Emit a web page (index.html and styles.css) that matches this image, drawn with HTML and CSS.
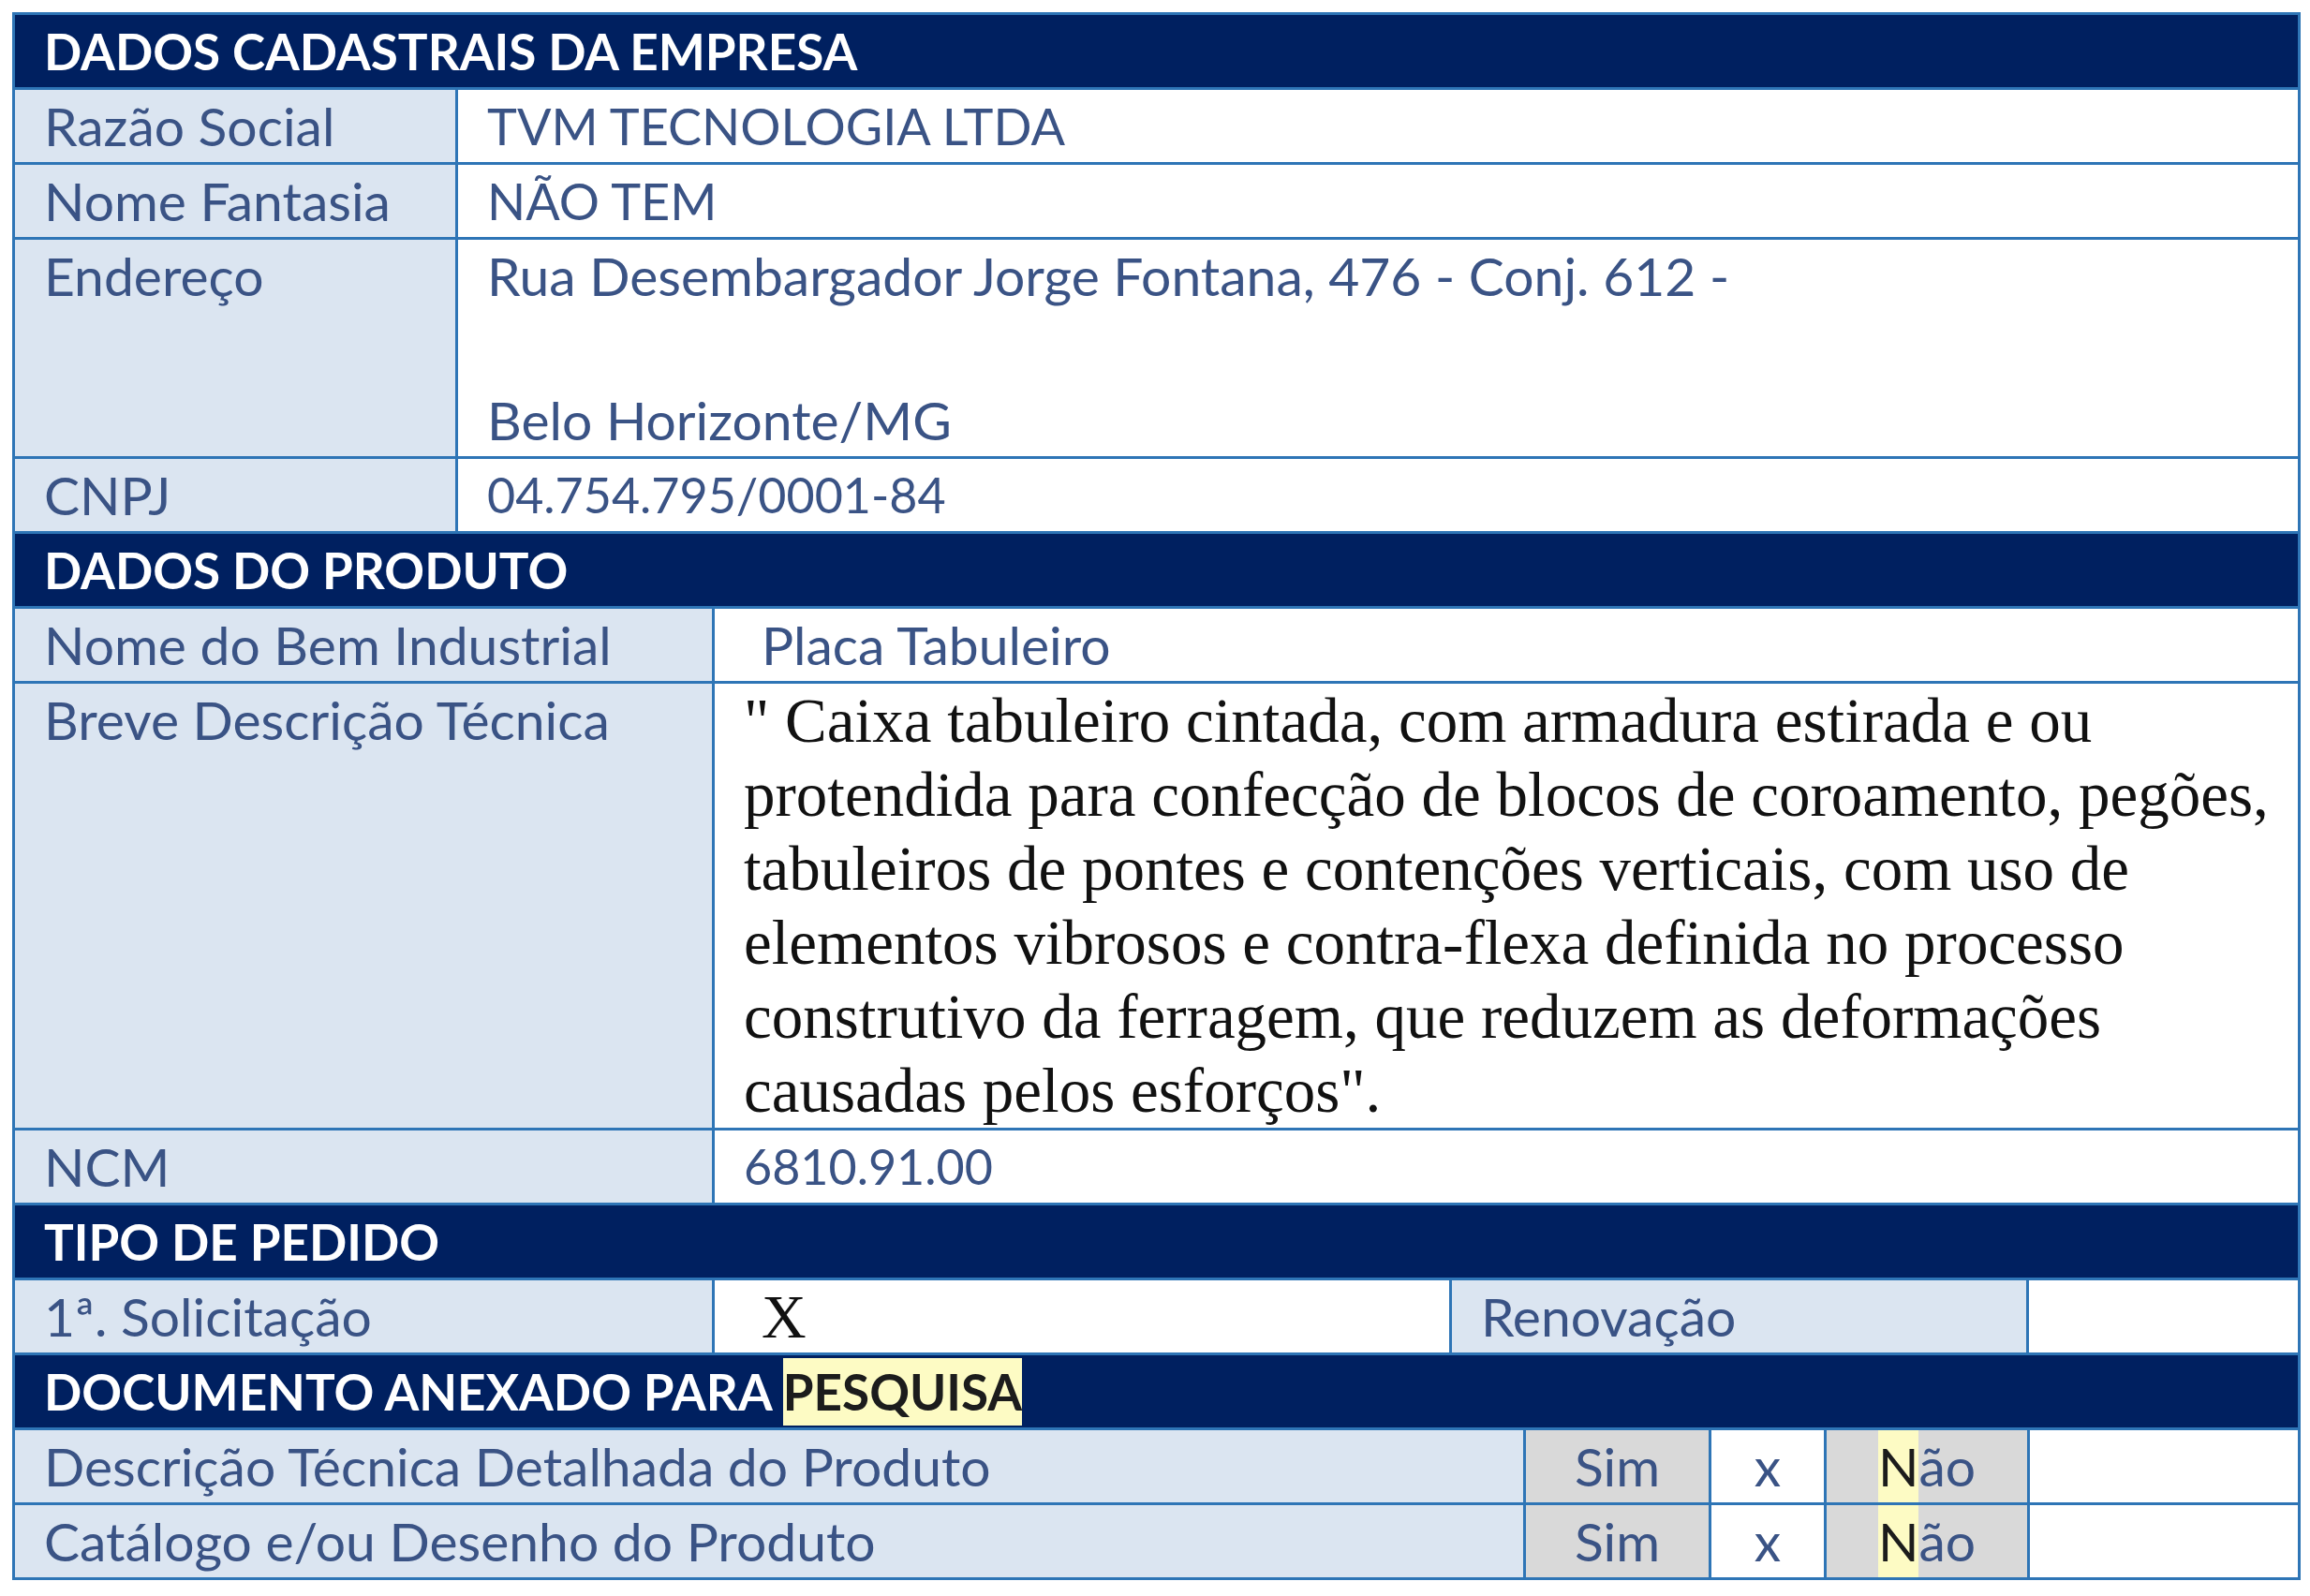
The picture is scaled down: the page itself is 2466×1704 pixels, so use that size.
FILE: index.html
```html
<!DOCTYPE html>
<html lang="pt-BR">
<head>
    <meta charset="UTF-8">
    <title>Dados Cadastrais</title>
    <link rel="stylesheet" href="styles.css">
</head>
<body>

    <div class="ficha">
        <div class="secao">DADOS CADASTRAIS DA EMPRESA</div>
        <div class="linha empresa">
            <div class="rotulo">Razão Social</div>
            <div class="valor caixa-alta">TVM TECNOLOGIA LTDA</div>
        </div>
        <div class="linha empresa">
            <div class="rotulo">Nome Fantasia</div>
            <div class="valor caixa-alta">NÃO TEM</div>
        </div>
        <div class="linha empresa">
            <div class="rotulo">Endereço</div>
            <div class="valor">Rua Desembargador Jorge Fontana, 476 - Conj. 612 -<br><br>Belo Horizonte/MG</div>
        </div>
        <div class="linha empresa">
            <div class="rotulo">CNPJ</div>
            <div class="valor numero">04.754.795/0001-84</div>
        </div>

        <div class="secao">DADOS DO PRODUTO</div>
        <div class="linha produto">
            <div class="rotulo">Nome do Bem Industrial</div>
            <div class="valor recuo">Placa Tabuleiro</div>
        </div>
        <div class="linha produto">
            <div class="rotulo">Breve Descrição Técnica</div>
            <div class="valor descricao">" Caixa tabuleiro cintada, com armadura estirada e ou<br>protendida para confecção de blocos de coroamento, pegões,<br>tabuleiros de pontes e contenções verticais, com uso de<br>elementos vibrosos e contra-flexa definida no processo<br>construtivo da ferragem, que reduzem as deformações<br>causadas pelos esforços".</div>
        </div>
        <div class="linha produto">
            <div class="rotulo">NCM</div>
            <div class="valor numero">6810.91.00</div>
        </div>

        <div class="secao">TIPO DE PEDIDO</div>
        <div class="linha tipo">
            <div class="rotulo">1ª. Solicitação</div>
            <div class="valor marcado">X</div>
            <div class="rotulo">Renovação</div>
            <div class="valor"></div>
        </div>

        <div class="secao">DOCUMENTO ANEXADO PARA <mark class="grifo">PESQUISA</mark></div>
        <div class="linha anexo">
            <div class="rotulo">Descrição Técnica Detalhada do Produto</div>
            <div class="opcao">Sim</div>
            <div class="valor opcao">x</div>
            <div class="opcao"><mark class="grifo">N</mark>ão</div>
            <div class="valor"></div>
        </div>
        <div class="linha anexo">
            <div class="rotulo">Catálogo e/ou Desenho do Produto</div>
            <div class="opcao">Sim</div>
            <div class="valor opcao">x</div>
            <div class="opcao"><mark class="grifo">N</mark>ão</div>
            <div class="valor"></div>
        </div>
    </div>

</body>
</html>
```

FILE: styles.css
```css
body {
    margin: 0;
    background-color: #ffffff;
    font-family: 'Lato', sans-serif;
    font-size: 57px;
    color: #3a5385; /* blue-grey text of the form */
}

.ficha {
    box-sizing: border-box;
    width: 2443px;
    margin: 13px 0 0 13px;
    border: 3px solid #2e75b6;
}

/* Dark section bars */
.secao {
    height: 80px;
    line-height: 77px;
    padding-left: 31px;
    box-sizing: border-box;
    border-top: 3px solid #2e75b6;
    background-color: #002060;
    color: #ffffff;
    font-size: 53px;
    font-weight: bold;
    white-space: nowrap;
}
.ficha > .secao:first-child {
    height: 77px;
    border-top: none;
}

.linha {
    display: grid;
    border-top: 3px solid #2e75b6;
    line-height: 77px;
}
.linha > div {
    box-sizing: border-box;
    padding-left: 31px;
    white-space: nowrap;
}
.linha > div + div {
    border-left: 3px solid #2e75b6;
}

.empresa { grid-template-columns: 470px 1fr; }
.produto { grid-template-columns: 744px 1fr; }
.tipo    { grid-template-columns: 744px 787px 616px 1fr; }
.anexo   { grid-template-columns: 1610px 198px 123px 217px 1fr; }

.rotulo {
    background-color: #dbe5f1;
}
.valor {
    background-color: #ffffff;
}
.recuo {
    padding-left: 50px !important;
}
.caixa-alta {
    font-size: 54px;
}
.numero {
    font-size: 52px;
}

.descricao {
    font-family: 'Liberation Serif', serif;
    font-size: 67px;
    line-height: 79px;
    color: #111111;
}

.marcado {
    font-family: 'Liberation Serif', serif;
    font-size: 66px;
    color: #111111;
    padding-left: 50px !important;
}

.opcao {
    padding-left: 0 !important;
    text-align: center;
    background-color: #d9d9d9;
}
.opcao.valor {
    background-color: #ffffff;
}

.grifo {
    display: inline-block;
    background-color: #fdfbc4;
    color: #1c1c1c;
}
.secao .grifo {
    line-height: 72px;
}
```
